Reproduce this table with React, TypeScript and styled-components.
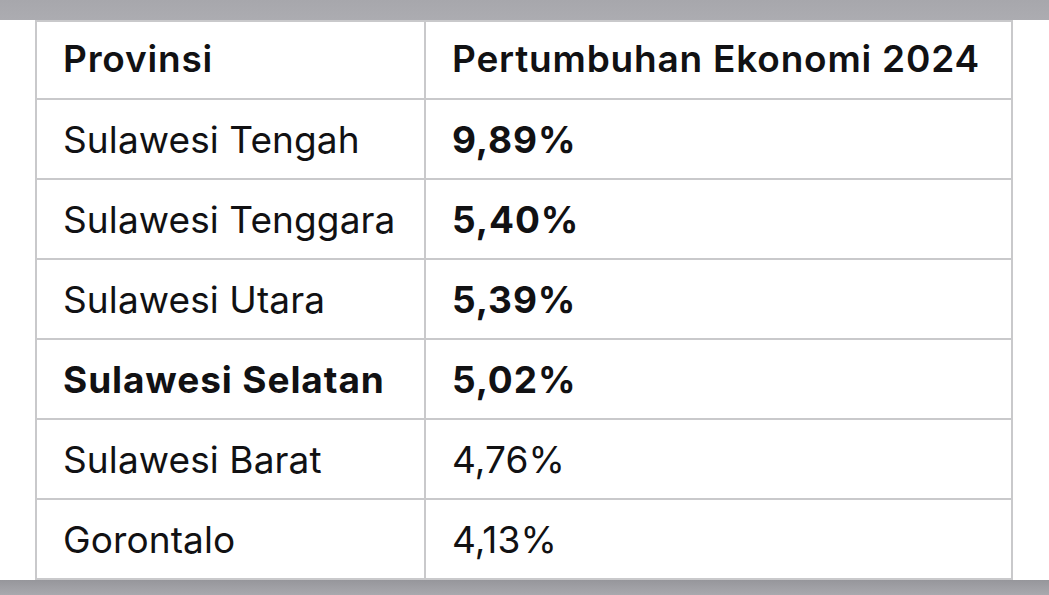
import React from "react";
import styled, { createGlobalStyle } from "styled-components";

const Global = createGlobalStyle`
  html, body { margin: 0; padding: 0; background: #ffffff; }
  body { font-family: Inter, "Noto Sans", sans-serif; -webkit-font-smoothing: antialiased; }
`;

const Page = styled.div`
  width: 1049px;
  height: 595px;
  display: flex;
  flex-direction: column;
  background: #ffffff;
  overflow: hidden;
`;

const TopBand = styled.div`
  height: 20px;
  flex: none;
  background: linear-gradient(#a7a7ac, #acacb1);
`;

const Body = styled.div`
  flex: 1;
  padding-left: 35px;
`;

const BottomBand = styled.div`
  height: 15px;
  flex: none;
  background: linear-gradient(#96969b, #a9a9ae);
`;

const Grid = styled.div`
  display: inline-grid;
  grid-template-columns: 387px 585px;
  grid-template-rows: 76px repeat(6, 78px);
  gap: 2px;
  padding: 2px;
  background: #c9c9cb;
`;

const Cell = styled.div<{ $bold?: boolean; $header?: boolean }>`
  background: #ffffff;
  display: flex;
  align-items: center;
  padding-left: 26px;
  padding-bottom: ${(p) => (p.$header ? "3px" : "0")};
  font-size: 37px;
  color: #111113;
  font-weight: ${(p) => (p.$header ? 600 : p.$bold ? 700 : 400)};
  white-space: nowrap;
  letter-spacing: ${(p) => (p.$header ? "0.8px" : p.$bold ? "0.9px" : "0.1px")};
`;

const rows: { name: string; value: string; boldName?: boolean; boldValue?: boolean }[] = [
  { name: "Sulawesi Tengah", value: "9,89%", boldValue: true },
  { name: "Sulawesi Tenggara", value: "5,40%", boldValue: true },
  { name: "Sulawesi Utara", value: "5,39%", boldValue: true },
  { name: "Sulawesi Selatan", value: "5,02%", boldName: true, boldValue: true },
  { name: "Sulawesi Barat", value: "4,76%" },
  { name: "Gorontalo", value: "4,13%" },
];

export default function App() {
  return (
    <Page>
      <Global />
      <TopBand />
      <Body>
        <Grid>
          <Cell $header>Provinsi</Cell>
          <Cell $header>Pertumbuhan Ekonomi 2024</Cell>
          {rows.map((r) => (
            <React.Fragment key={r.name}>
              <Cell $bold={r.boldName}>{r.name}</Cell>
              <Cell $bold={r.boldValue}>{r.value}</Cell>
            </React.Fragment>
          ))}
        </Grid>
      </Body>
      <BottomBand />
    </Page>
  );
}
